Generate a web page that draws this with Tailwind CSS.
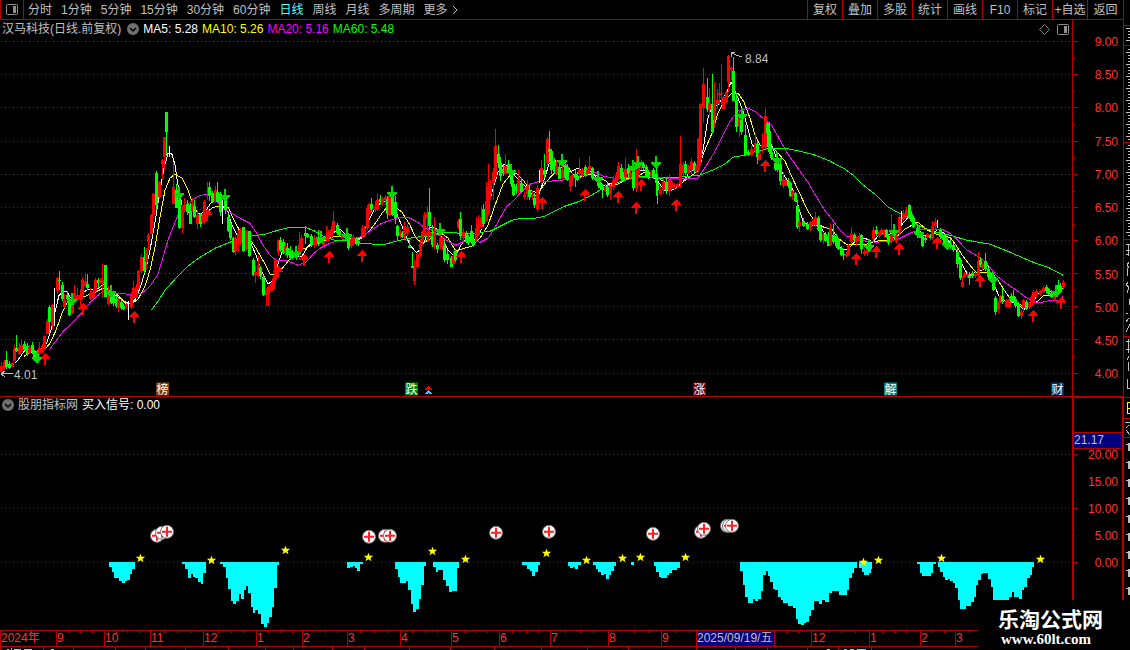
<!DOCTYPE html>
<html lang="zh-CN">
<head>
  <meta charset="UTF-8" />
  <meta name="viewport" content="width=device-width, initial-scale=1" />
  <title>汉马科技 日线</title>
  <script src="https://cdn.jsdelivr.net/npm/@tailwindcss/browser@4"></script>
</head>
<body class="relative flex h-screen min-h-[480px] overflow-hidden bg-black font-['Liberation_Sans','Noto_Sans_CJK_SC',sans-serif] text-[12px] leading-[14px] text-[#c0c0c0]">
  <div class="flex min-w-0 flex-1 flex-col">

    <header class="flex h-5 shrink-0 items-stretch justify-between border-b border-[#b40000] whitespace-nowrap">
      <nav class="flex items-center gap-[9px]">
        <button aria-label="侧栏" class="-mr-[5px] flex h-full w-6 items-center justify-center border-x border-[#b40000]">
          <svg class="h-[11px] w-3" viewBox="0 0 12 11"><rect x=".5" y=".5" width="11" height="10" rx="1" fill="none" stroke="#909090" /><rect x="7" y="2" width="3" height="7" fill="#909090" /></svg>
        </button>
        <button>分时</button>
        <button>1分钟</button>
        <button>5分钟</button>
        <button>15分钟</button>
        <button>30分钟</button>
        <button>60分钟</button>
        <button class="text-[#54fcfc]">日线</button>
        <button>周线</button>
        <button>月线</button>
        <button>多周期</button>
        <button class="flex items-center gap-1">更多
          <svg class="h-2 w-[6px]" viewBox="0 0 6 8"><path d="M1 0l4 4-4 4" fill="none" stroke="#c0c0c0" /></svg>
        </button>
      </nav>
      <div class="flex">
        <button class="w-[35px] border-l border-[#b40000]">复权</button>
        <button class="w-[35px] border-l border-[#b40000]">叠加</button>
        <button class="w-[35px] border-l border-[#b40000]">多股</button>
        <button class="w-[35px] border-l border-[#b40000]">统计</button>
        <button class="w-[35px] border-l border-[#b40000]">画线</button>
        <button class="w-[35px] border-l border-[#b40000]">F10</button>
        <button class="w-[35px] border-l border-[#b40000]">标记</button>
        <button class="w-[35px] border-l border-[#b40000]">+自选</button>
        <button class="w-[36px] border-l border-[#b40000]">返回</button>
      </div>
    </header>

    <!-- K线 -->
    <section class="flex min-h-0 grow-[377] basis-0 border-b border-[#b40000]">
      <div id="pricePlot" class="relative min-w-0 flex-1">
        <svg id="priceSvg" class="absolute inset-0 h-full w-full" viewBox="0 20 1072 376" preserveAspectRatio="none" shape-rendering="crispEdges"></svg>
        <div class="relative flex items-center justify-between pt-[2px] pr-[3px] pl-[2px] whitespace-nowrap">
          <div class="flex items-center gap-1">
            <h1 class="pr-[2px]">汉马科技(日线.前复权)</h1>
            <button aria-label="展开">
              <svg class="h-3 w-3" viewBox="0 0 12 12"><circle cx="6" cy="6" r="6" fill="#707070" /><path d="M3 5l3 3 3-3" fill="none" stroke="#000" stroke-width="1.5" /></svg>
            </button>
            <span class="text-white">MA5: 5.28</span>
            <span class="text-[#ffff00]">MA10: 5.26</span>
            <span class="text-[#ff00ff]">MA20: 5.16</span>
            <span class="text-[#00ff00]">MA60: 5.48</span>
          </div>
          <div class="flex items-center gap-[7px]">
            <svg class="h-[11px] w-[11px]" viewBox="0 0 11 11"><path d="M5.5 .5l5 5-5 5-5-5z" fill="none" stroke="#808080" /></svg>
            <svg class="h-[11px] w-3" viewBox="0 0 12 11"><rect x=".5" y=".5" width="11" height="10" rx="1" fill="none" stroke="#909090" /><rect x="7" y="2" width="3" height="7" fill="#909090" /></svg>
          </div>
        </div>
      </div>
      <div class="relative w-[51px] shrink-0 border-l border-[#b40000] pr-[5px]">
        <svg id="priceTicks" class="absolute inset-0 h-full w-[6px]" viewBox="1073 20 6 376" preserveAspectRatio="none" shape-rendering="crispEdges"></svg>
        <ul class="flex h-full flex-col justify-between pt-[15px] pb-[15px] text-right text-[#ff3232]">
          <li>9.00</li><li>8.50</li><li>8.00</li><li>7.50</li><li>7.00</li><li>6.50</li><li>6.00</li><li>5.50</li><li>5.00</li><li>4.50</li><li>4.00</li>
        </ul>
      </div>
    </section>

    <!-- 副图指标 -->
    <section class="flex min-h-0 grow-[233] basis-0">
      <div class="relative min-w-0 flex-1">
        <svg id="signalSvg" class="absolute inset-0 h-full w-full" viewBox="0 397 1072 233" preserveAspectRatio="none"></svg>
        <div class="relative flex items-center gap-1 pt-[1px] pl-[2px] whitespace-nowrap">
          <button aria-label="展开">
            <svg class="h-3 w-3" viewBox="0 0 12 12"><circle cx="6" cy="6" r="6" fill="#707070" /><path d="M3 5l3 3 3-3" fill="none" stroke="#000" stroke-width="1.5" /></svg>
          </button>
          <h2>股朋指标网</h2>
          <span class="text-white">买入信号: 0.00</span>
        </div>
      </div>
      <div class="relative w-[51px] shrink-0 border-x border-l-2 border-t border-[#b40000] pr-1">
        <svg id="signalTicks" class="absolute inset-0 h-full w-[5px]" viewBox="1074 398 5 232" preserveAspectRatio="none" shape-rendering="crispEdges"></svg>
        <span class="absolute inset-x-0 top-[34px] h-[17px] border-y border-[#b40000] bg-[#000080]">21.17</span>
        <ul class="relative flex h-full flex-col justify-between pt-[50px] pb-[60px] text-right text-[#ff3232]">
          <li>20.00</li><li>15.00</li><li>10.00</li><li>5.00</li><li>0.00</li>
        </ul>
      </div>
    </section>

    <!-- 时间轴 -->
    <footer class="relative shrink-0">
      <ol id="months" class="flex h-[17px] border-y border-[#b40000] text-[#ff3232]"></ol>
      <svg id="monthTicks" class="absolute inset-x-0 top-0 h-5 w-full" viewBox="0 630 1123 20" preserveAspectRatio="none" shape-rendering="crispEdges"></svg>
      <div class="h-[3px]"></div>
    </footer>
  </div>

  <aside class="w-[7px] shrink-0 border-l border-[#b40000]">
    <svg id="sideSvg" class="h-full w-full" viewBox="1124 0 6 650" preserveAspectRatio="none" shape-rendering="crispEdges"></svg>
  </aside>

  <a href="#" class="absolute right-0 bottom-0 flex h-[50px] w-[152px] flex-col items-start bg-black pt-[8px] pl-5 font-bold text-white">
    <span class="text-[21px] leading-[23px]">乐淘公式网</span>
    <span class="pl-[3px] font-['Liberation_Serif',serif] text-[15px] leading-[16px]">www.60lt.com</span>
  </a>

  <script>
    // x 最高 实体上 实体下 最低 颜色(r/g/w)
    const candles = `
1 362 366 372 374 r,4 360 362 368 370 r,6 351 360 367 369 g,9 361 364 368 369 g,12 362 363 367 367 r,14 345 349 361 362 r,16 335 348 351 352 g,19 343 347 354 355 r,21 339 345 351 352 r,24 341 344 350 351 g,27 343 346 354 356 g,29 345 347 353 354 r,32 342 345 352 354 g,34 350 352 358 359 g,37 350 353 358 361 g,39 342 348 354 355 r,42 344 346 352 353 r,44 335 336 350 350 r,47 319 321 334 334 r,49 305 307 322 333 g,52 304 305 326 329 r,54 288 288 289 326 w,57 277 278 291 294 r,59 271 280 281 290 g,62 282 285 299 301 g,64 294 300 307 308 r,67 291 295 299 303 g,69 298 300 315 316 g,72 300 304 313 314 r,74 285 293 302 303 r,77 288 295 300 301 r,80 289 295 300 305 r,82 277 280 295 299 r,85 273 281 286 287 r,87 274 284 288 290 g,90 288 293 299 300 r,93 289 291 298 299 r,95 278 280 291 292 r,98 278 280 283 288 g,100 278 280 283 284 r,102 264 280 283 298 r,105 265 265 297 297 g,108 286 296 304 305 r,111 285 296 303 304 g,113 292 295 303 306 g,116 296 299 306 308 g,118 298 301 307 312 r,121 300 302 308 310 g,123 304 306 309 310 g,126 303 304 306 309 r,128 301 305 306 320 w,131 292 295 307 309 r,133 281 288 298 300 r,136 284 287 297 298 r,138 270 271 288 289 r,141 254 257 271 273 r,144 247 257 271 273 g,146 248 251 262 270 r,148 233 235 242 250 r,151 214 215 234 234 r,153 193 194 215 215 r,156 171 173 205 210 g,159 181 182 197 199 r,162 159 160 164 180 r,164 137 137 157 170 r,166 112 112 132 156 g,169 146 153 154 157 w,173 162 187 204 204 r,176 184 190 208 208 g,179 190 200 228 229 g,182 205 212 228 233 r,184 198 205 211 212 r,187 200 204 212 215 g,190 203 205 224 224 g,192 198 203 211 212 r,194 200 206 217 218 g,197 210 215 224 229 r,200 213 214 224 227 g,202 214 216 222 223 r,204 200 202 222 223 r,207 182 191 192 200 r,209 182 187 195 201 g,212 191 193 202 203 g,215 186 190 202 203 r,217 182 192 202 203 g,220 192 194 212 216 g,222 200 200 201 224 w,225 195 200 210 214 g,228 213 217 231 232 g,230 222 224 238 240 g,233 237 238 252 253 g,235 236 238 251 255 r,238 230 233 244 251 r,240 228 230 243 245 r,243 227 227 251 252 g,246 230 231 249 251 r,249 231 231 256 257 g,253 258 260 275 276 g,255 266 272 275 283 r,258 255 265 274 277 r,260 266 268 276 279 g,263 275 277 295 296 g,266 288 290 295 306 r,268 285 287 294 306 r,271 282 284 291 292 r,273 276 278 289 290 r,275 259 260 280 283 r,278 239 241 252 255 r,280 237 240 250 252 g,283 239 242 253 254 g,285 243 246 252 256 r,287 243 248 255 258 g,290 246 251 258 260 g,292 250 254 258 259 g,296 246 251 257 260 g,299 232 245 255 260 r,301 235 238 250 252 r,305 226 233 236 244 g,307 233 234 237 238 g,311 234 236 245 247 g,314 235 238 245 248 r,316 237 240 243 246 r,318 230 240 244 246 g,323 240 241 245 246 r,326 226 236 240 242 r,328 230 232 238 241 r,331 226 229 237 239 r,333 211 221 231 233 r,337 223 225 233 235 g,339 230 231 235 237 g,342 233 236 238 240 r,348 233 238 248 250 g,351 236 239 246 248 r,353 235 237 243 245 r,356 237 238 244 245 g,358 239 241 244 246 g,362 225 228 236 238 r,364 226 228 236 237 r,367 205 208 228 230 r,369 203 204 213 215 r,371 198 204 209 212 g,375 201 206 210 212 r,377 194 200 209 211 r,380 195 199 202 205 g,382 197 199 203 206 r,385 195 197 200 205 r,387 196 199 214 219 g,389 193 196 215 216 r,392 190 194 215 216 g,395 196 202 218 224 g,397 225 226 236 240 g,400 230 232 236 238 r,402 231 233 237 238 g,404 222 226 238 239 r,407 224 227 233 236 r,409 240 246 248 248 g,412 252 266 268 268 g,414 260 268 281 285 r,417 252 254 267 268 r,420 239 244 256 257 r,422 230 232 240 245 r,424 212 215 232 236 r,427 206 213 217 236 r,429 188 212 226 228 g,432 225 232 245 247 g,434 217 233 247 249 r,437 243 245 249 253 g,440 233 238 246 249 r,442 236 240 247 250 r,444 240 246 260 262 g,447 250 254 260 264 g,451 256 258 267 267 g,453 250 256 264 265 r,455 249 251 260 262 g,458 219 221 228 229 r,460 212 219 236 240 g,463 228 232 238 243 r,466 231 233 242 243 g,468 235 237 243 245 g,471 225 231 242 244 g,473 235 240 245 247 g,476 217 228 240 242 r,478 215 224 235 236 r,481 206 217 227 229 r,483 204 209 224 227 g,486 182 201 221 222 r,488 164 187 213 215 r,490 180 184 194 200 r,493 168 172 183 200 r,495 129 146 177 179 r,498 145 154 163 168 g,500 157 163 176 181 g,503 165 169 173 176 g,505 154 166 174 175 r,508 160 164 172 173 g,511 165 174 184 187 g,513 180 184 195 196 g,516 184 186 191 194 g,518 170 180 192 193 r,521 178 183 192 193 g,524 192 195 197 199 r,527 180 186 194 200 r,529 185 190 197 200 g,532 191 194 197 200 r,534 193 198 205 208 g,537 185 188 209 212 r,539 170 171 172 183 w,541 160 168 182 185 r,544 154 170 175 178 g,547 137 139 163 166 r,549 131 149 152 162 g,551 149 151 170 174 g,554 158 161 172 174 g,556 160 166 174 175 r,559 163 167 179 179 g,562 165 170 178 180 r,565 163 165 178 179 g,567 164 167 180 181 g,570 176 178 187 191 r,572 173 175 178 185 r,575 170 174 178 187 g,577 172 176 180 181 g,579 158 170 174 178 r,582 168 170 175 177 r,585 165 167 176 177 g,587 168 170 174 176 r,589 156 166 169 173 r,592 167 168 178 180 g,598 174 178 186 188 g,600 182 184 188 190 g,602 184 187 190 198 g,605 184 187 191 192 r,607 183 187 195 197 g,610 184 186 194 200 r,613 176 180 187 190 r,616 172 175 182 184 r,618 162 166 179 180 r,621 164 168 179 181 g,623 172 175 180 182 g,625 158 169 177 180 r,628 164 168 174 178 g,630 170 173 177 180 r,633 166 172 188 191 g,636 149 171 189 192 r,638 157 165 173 178 r,641 160 162 168 170 r,643 162 164 168 170 g,646 165 167 176 178 g,648 170 173 178 179 g,651 170 172 176 178 r,653 168 170 177 179 g,656 165 174 183 196 g,657 180 183 190 204 g,660 187 190 194 195 r,663 178 182 190 194 r,666 178 182 190 194 g,669 174 180 191 196 r,671 180 182 188 190 r,674 183 185 187 189 r,677 183 184 187 188 r,680 136 164 184 188 r,683 162 165 173 176 r,685 161 164 173 175 g,688 165 167 173 174 r,691 158 162 170 174 r,694 161 163 171 173 g,696 165 166 171 173 r,698 138 139 170 172 r,700 103 104 160 165 r,703 68 84 108 123 r,707 78 97 109 112 g,709 88 103 110 116 r,712 74 104 132 134 g,714 82 104 120 128 r,717 89 100 104 109 r,719 83 93 95 105 r,721 64 93 94 105 r,723 96 97 109 109 r,726 90 92 102 103 r,728 55 56 82 92 r,731 67 68 69 80 r,733 57 71 101 101 g,736 93 100 127 132 g,739 110 118 126 137 r,741 110 120 132 135 g,745 125 135 155 156 g,748 150 152 155 156 g,751 146 149 155 156 r,755 134 143 151 153 r,757 141 144 157 164 g,759 150 153 160 161 r,762 133 145 148 153 r,765 109 116 147 149 r,767 122 124 133 147 g,769 122 131 152 154 g,771 147 152 158 160 g,775 160 163 169 171 g,777 158 160 170 172 g,780 160 164 181 185 g,783 172 179 186 188 r,785 178 180 185 186 r,788 178 181 186 188 g,790 182 183 196 197 g,792 190 191 195 200 r,795 192 193 201 202 g,797 200 206 227 229 g,799 218 222 226 232 r,803 218 221 226 227 g,807 222 224 229 230 g,810 221 222 227 231 r,813 219 220 225 226 r,815 212 217 225 227 r,818 216 218 230 231 g,820 225 227 240 242 g,823 232 234 240 244 r,825 232 234 241 242 g,828 232 236 246 246 g,830 223 228 245 246 r,833 224 235 242 244 g,836 234 236 246 248 g,838 238 240 249 250 g,841 246 248 255 256 g,843 250 254 255 260 g,846 252 254 256 257 r,848 244 245 255 256 r,851 227 234 242 244 r,854 233 235 240 242 g,856 236 238 242 246 r,859 233 236 241 243 r,861 234 235 249 254 g,864 249 251 254 256 r,867 247 250 253 256 r,869 239 242 248 252 g,873 227 230 239 241 r,876 226 230 234 236 g,879 231 232 236 238 r,881 228 230 233 235 r,884 229 230 235 237 r,886 229 230 237 238 g,888 234 236 243 245 g,891 214 235 241 244 r,894 224 231 236 240 g,896 232 236 242 244 r,899 215 217 233 236 r,901 211 214 215 224 w,903 210 213 219 221 r,906 207 210 216 217 r,909 204 205 217 219 g,911 211 214 221 222 g,913 216 218 227 228 g,917 224 228 236 238 g,922 233 236 246 247 g,925 236 238 240 243 g,927 233 234 237 238 r,930 234 235 238 239 g,932 221 226 238 240 r,935 218 222 226 229 r,937 220 222 223 228 w,940 228 230 237 239 g,942 233 235 238 240 g,944 235 237 244 246 g,947 239 242 248 250 g,950 239 243 247 249 g,953 243 245 250 252 g,957 248 252 264 268 g,960 258 260 278 280 g,962 276 282 287 287 r,964 272 274 277 278 r,967 272 274 276 278 r,969 272 275 278 285 g,972 271 273 276 278 g,975 272 274 276 278 r,978 252 261 275 277 r,980 257 260 265 267 g,982 262 264 268 270 r,985 253 261 269 271 g,988 267 269 277 279 g,990 272 274 280 282 g,993 273 276 290 291 g,995 296 298 312 315 g,998 301 303 309 313 r,1000 295 296 302 303 r,1002 288 296 302 304 g,1006 299 300 307 308 r,1009 298 299 307 308 r,1011 293 296 302 303 g,1013 290 296 301 302 g,1015 297 299 306 308 g,1018 302 304 316 317 g,1021 310 312 316 319 r,1023 299 300 308 312 r,1026 300 302 309 310 g,1029 302 303 307 309 r,1031 295 297 306 307 r,1033 290 292 302 303 r,1036 289 291 296 298 r,1040 290 291 295 296 r,1043 286 288 292 293 r,1046 285 287 291 293 g,1048 288 289 294 295 g,1051 290 293 297 298 g,1054 291 293 299 301 r,1058 280 285 290 292 g,1060 283 286 292 293 g,1063 280 282 287 290 r`;

    const averages = [
      ["#ffffff", "15,363 20,357 24,351 30,348 36,353 42,351 47,342 51,330 55,312 59,295 63,292 67,291 70,297 76,300 82,293 88,289 97,289 103,284 110,291 117,296 124,301 131,304 136,298 141,285 146,268 150,250 155,222 160,190 164,168 168,153 172,154 175,165 178,185 182,205 188,213 194,210 200,214 206,210 212,201 217,197 222,205 228,212 232,225 238,237 244,234 250,241 256,255 262,272 268,284 273,280 278,264 284,246 290,250 296,257 302,256 308,246 316,240 324,240 332,233 340,229 348,237 356,240 362,236 368,222 374,210 382,201 390,203 397,214 404,231 410,245 417,253 424,242 430,227 436,228 442,238 448,250 455,257 461,245 467,237 474,240 480,233 486,215 492,192 498,172 504,164 510,168 516,177 524,185 532,194 538,196 544,180 549,164 556,160 564,165 570,172 578,168 585,173 592,171 598,180 604,186 612,183 620,174 628,173 634,181 640,170 646,170 652,177 658,181 664,190 670,191 678,187 683,182 690,171 698,170 703,150 708,118 712,105 717,106 722,99 727,92 731,82 736,93 742,108 747,125 752,144 757,150 762,150 768,139 773,148 779,166 785,177 791,185 796,198 800,212 804,223 812,225 820,226 826,236 835,239 842,250 848,249 856,240 865,238 873,242 880,233 888,234 896,233 903,223 910,215 916,223 922,235 930,236 938,229 944,233 950,243 956,250 962,264 968,275 976,272 984,269 988,265 993,282 1000,298 1008,302 1016,303 1024,309 1032,303 1040,291 1048,290 1056,294 1063,285"],
      ["#ffff00", "24,356 30,352 38,351 44,350 50,343 56,330 62,313 68,301 76,296 85,296 95,292 103,288 110,290 118,295 126,303 132,303 138,299 145,286 150,270 155,247 160,217 165,190 170,178 175,174 182,178 188,190 194,208 200,215 207,212 213,207 222,206 228,207 234,220 240,231 248,236 256,248 264,262 270,274 276,275 284,266 292,256 300,250 308,247 316,241 325,240 335,236 345,236 355,241 363,237 370,230 376,222 382,213 388,206 394,206 402,212 410,225 416,238 422,243 430,239 440,232 448,238 456,251 464,248 472,246 480,238 488,225 495,205 503,184 510,175 516,173 524,181 530,190 538,193 546,182 555,172 563,166 568,167 573,174 580,177 590,174 598,176 606,181 612,186 620,183 628,178 636,178 644,172 652,173 660,179 668,184 676,186 684,181 692,175 698,171 704,152 712,133 718,113 724,101 732,93 738,93 744,102 750,118 755,135 760,145 766,145 772,147 778,153 785,161 792,177 800,194 808,211 816,223 824,227 832,229 838,238 846,244 856,244 866,244 876,241 886,240 896,237 905,229 912,225 918,222 926,229 934,233 942,236 950,237 956,245 963,256 970,265 976,272 984,272 992,273 998,280 1005,291 1013,302 1022,305 1030,304 1038,301 1044,295 1052,296 1063,288"],
      ["#ff00ff", "49,350 55,342 63,331 72,323 82,312 92,300 103,291 115,293 130,294 142,293 150,286 158,274 163,257 168,240 173,227 178,215 184,208 190,202 198,196 206,194 214,197 222,207 230,212 240,218 250,223 256,232 263,245 270,255 276,260 286,260 298,265 306,262 313,254 320,248 330,243 340,240 350,239 360,237 370,231 380,224 390,220 400,217 408,217 416,221 424,227 432,230 440,236 448,241 456,245 464,241 472,239 480,242 488,238 494,229 500,218 507,206 514,200 522,191 530,184 540,181 550,181 562,180 575,177 585,174 595,172 603,176 615,178 640,177 670,178 698,178 706,166 714,153 722,137 730,121 738,111 748,108 756,112 764,119 772,126 780,140 788,154 800,171 808,182 816,196 824,209 832,219 840,230 846,236 856,238 866,241 876,242 890,241 900,238 910,233 918,230 930,229 942,229 950,233 958,240 966,249 976,255 986,262 996,275 1006,283 1018,291 1026,297 1034,302 1042,302 1052,300 1060,300 1063,296"],
      ["#00ff00", "151,310 158,301 165,290 175,279 188,266 200,257 215,248 230,242 240,238 250,236 265,234 278,230 290,227 305,227 315,231 325,237 335,240 350,240 360,243 375,244 385,244 400,240 415,237 430,236 445,232 460,233 475,233 490,231 500,226 512,220 522,218 535,218 545,216 555,211 565,206 580,201 590,196 600,190 612,184 625,180 640,176 660,178 680,177 700,175 715,169 725,164 733,157 745,155 757,151 770,148 785,148 800,151 815,155 830,161 845,169 853,175 862,184 875,194 887,206 897,212 908,217 918,225 935,232 950,235 967,240 990,244 1010,252 1033,262 1048,267 1063,275"]
    ];

    const buys = [[45,353],[83,303],[134,311],[207,209],[278,266],[304,254],[329,251],[362,250],[428,230],[461,251],[542,197],[585,189],[618,191],[636,202],[641,179],[676,199],[765,160],[856,253],[876,246],[899,243],[937,237],[980,275],[1033,310],[1061,297]];
    const sells = [[37,363],[72,305],[111,297],[179,199],[225,201],[296,258],[321,243],[347,240],[392,198],[440,235],[511,176],[562,166],[598,183],[633,172],[638,168],[656,168],[742,120],[777,164],[869,251],[894,236],[919,238],[947,249],[993,284],[1056,297]];

    const red = "#b40000";
    const hline = (y, w) => `<path d="M1 ${y + 0.5}H${w}" stroke="#c80000" stroke-dasharray="1 3" />`;

    let price = [41, 74, 107, 141, 174, 207, 240, 273, 306, 339, 373].map(y => hline(y, 1072)).join("");
    // 均线在K线下面
    averages.forEach(([color, pts]) => {
      price += `<polyline points="${pts}" fill="none" stroke="${color}" />`;
    });
    const colors = { r: "#ff0000", g: "#00ff00", w: "#ffffff" };
    candles.trim().split(",").forEach(row => {
      const [x, hi, top, bot, lo, c] = row.split(" ");
      price += `<rect x="${x}" y="${hi}" width="1" height="${lo - hi}" fill="${colors[c]}" />`;
      if (c !== "w") price += `<rect x="${x - 1}" y="${top}" width="3" height="${Math.max(1, bot - top)}" fill="${colors[c]}" />`;
    });
    buys.forEach(([x, y]) => {
      price += `<path d="M${x} ${y}h1l4 5v1h-4v6h-2v-6h-4v-1z" fill="#ff0000" />`;
    });
    sells.forEach(([x, y]) => {
      price += `<path d="M${x} ${y}h1l4 -5v-1h-4v-6h-2v6h-4v1z" fill="#00d800" />`;
    });
    price += `<path d="M1 373.5H13M1 373.5l4 -3M1 373.5l4 3M731.5 57V52.5H735M731 53l11 4" fill="none" stroke="#c0c0c0" />`;
    price += `<path d="M425 390v-1l3 -3h1l3 3v1h-2l-1 -1h-1l-1 1z" fill="#ff0000" /><path d="M425 394v-1l3 -3h1l3 3v1h-2l-1 -1h-1l-1 1z" fill="#40c0ff" />`;
    document.getElementById("priceSvg").innerHTML = price;

    let ticks = "";
    [41, 74, 107, 141, 174, 207, 240, 273, 306, 339, 373].forEach(y => {
      ticks += `<rect x="1073" y="${y}" width="5" height="1" fill="${red}" />`;
      if (y < 373) ticks += `<rect x="1073" y="${y + 17}" width="2" height="1" fill="${red}" />`;
    });
    document.getElementById("priceTicks").innerHTML = ticks;

    // 图上文字: x, y(中心), 文字, 样式
    const labels = [
      [14, 374, "4.01", ""],
      [745, 58, "8.84", ""],
      [156, 389, "榜", "bg-[#804000] text-white"],
      [405, 389, "跌", "bg-[#008000] text-white"],
      [693, 389, "涨", "bg-[#700000] text-white"],
      [884, 389, "解", "bg-[#008080] text-white"],
      [1051, 389, "财", "bg-[#003468] text-white"]
    ];
    const plot = document.getElementById("pricePlot");
    labels.forEach(([x, y, text, cls]) => {
      const el = document.createElement("span");
      el.className = "absolute flex h-[13px] min-w-[13px] -translate-y-1/2 items-center justify-center overflow-hidden " + cls;
      el.style.left = (x / 1072 * 100) + "%";
      el.style.top = ((y - 20) / 376 * 100) + "%";
      el.textContent = text;
      plot.appendChild(el);
    });

    // 副图
    const bars = "M109 562V567H112V572H114V578H119V581H122V583H125V581H127V580H130V574H132V569H135V562Z M182 562V564H185V569H188V578H191V574H193V577H195V578H198V582H201V584H203V573H206V562Z M220 562V564H223V567H226V578H228V589H231V601H233V604H236V601H239V594H241V599H244V590H246V586H248V593H251V607H253V613H255V610H258V614H261V624H264V627H267V623H269V617H272V607H274V588H277V565H279V562Z M347 562V568H350V567H353V566H355V568H357V571H360V564H363V562Z M395 562V569H398V577H400V583H406V581H408V590H411V604H413V612H416V609H419V599H421V585H424V566H426V562Z M433 562V567H436V572H438V570H443V580H446V586H449V592H452V591H457V568H459V562Z M522 562V565H527V569H530V571H532V576H535V572H538V565H540V562Z M568 562V566H570V568H573V567H575V569H578V565H581V562Z M593 562V565H596V569H598V572H601V575H604V574H606V579H609V575H611V571H614V566H616V562Z M631 562V565H634V562Z M654 562V566H656V572H659V577H661V578H667V575H669V573H672V570H677V568H680V562Z M740 562V571H743V585H745V597H748V603H753V599H755V601H758V599H761V591H763V575H766V571H768V576H770V582H773V589H775V590H778V597H781V600H783V603H788V606H793V608H796V619H798V624H801V625H804V623H806V622H809V616H811V610H814V601H819V604H822V600H825V602H829V593H832V591H839V595H847V590H849V578H852V573H854V568H857V562Z M859 562V568H862V572H864V575H869V573H871V569H872V562Z M917 562V564H920V573H922V576H931V573H933V564H936V562Z M938 562V567H940V572H943V577H945V580H948V579H950V581H953V583H955V588H958V600H960V609H966V606H971V602H974V597H976V585H978V580H981V574H983V573H988V579H991V587H993V600H1009V597H1012V592H1014V597H1019V599H1022V590H1024V587H1027V578H1030V575H1032V567H1034V562Z";
    const stars = [[140,558],[211,560],[285,550],[368,557],[432,551],[465,559],[546,553],[586,560],[622,558],[640,557],[685,557],[863,562],[878,560],[941,558],[1040,559]];
    const crosses = [[157,536],[162,533],[167,532],[369,537],[385,536],[390,536],[496,533],[549,532],[653,534],[701,532],[704,529],[727,526],[729,526],[732,526]];
    let signal = `<g shape-rendering="crispEdges">${hline(454, 1072)}${hline(508, 1072)}${hline(562, 1072)}<path d="${bars}" fill="#00ffff" /></g>`;
    crosses.forEach(([x, y]) => {
      signal += `<circle cx="${x}" cy="${y}" r="6.5" fill="#fff" stroke="#707070" /><path d="M${x - 5} ${y}h10M${x} ${y - 5}v10" stroke="#ff2020" stroke-width="2" />`;
    });
    stars.forEach(([x, y]) => {
      signal += `<path d="M${x + 0.5} ${y - 4}l1.2 3h3.5l-2.7 2.2 1 3.3-3-2-3 2 1-3.3-2.7-2.2h3.5z" fill="#ffff00" />`;
    });
    document.getElementById("signalSvg").innerHTML = signal;
    document.getElementById("signalTicks").innerHTML = [454, 481, 508, 535, 562].map((y, i) =>
      `<rect x="1074" y="${y}" width="${i % 2 ? 1 : 4}" height="1" fill="${red}" />`).join("");

    // 月份, 起点
    const months = [["2024年",0],["9",56],["10",104],["11",150],["12",203],["1",256],["2",302],["3",347],["4",400],["5",451],["6",499],["7",550],["8",608],["9",661],["2025/09/19/五",696],["",774],["12",811],["1",869],["2",920],["3",955]];
    document.getElementById("months").innerHTML = months.map(([name, start], i) => {
      const end = i < months.length - 1 ? months[i + 1][1] : 1123;
      const cls = name.length > 8 ? "bg-[#000080] text-[#c0c0c0]" : "";
      return `<li class="shrink-0 border-l border-[#b40000] whitespace-nowrap ${cls}" style="width:${(end - start) / 1123 * 100}%">${name}</li>`;
    }).join("");

    let mt = [68,80,92,116,127,139,164,177,191,218,231,243,268,280,292,313,325,337,360,374,387,412,425,437,464,475,487,512,526,538,565,580,593,621,634,648,675,689,786,798,829,841,855,882,894,906,931,944,969]
      .map(x => `<rect x="${x}" y="630" width="1" height="3" fill="${red}" />`).join("");
    mt += [0,43,73,115,145,185,228,265,293,332,364,409,450,494,541,587,628,696,735,767,807,838,871]
      .map(x => `<rect x="${x}" y="647" width="1" height="3" fill="${red}" />`).join("");
    mt += `<path d="M7 649.5h2M11 648v2M14 649.5h7M24 649.5h8M51 649.5h3M827 649.5h3" stroke="#c0c0c0" /><path d="M844 649.5h3M850 649.5h4M857 649.5h9" stroke="#00ffff" />`;
    document.getElementById("monthTicks").innerHTML = mt;

    // 右侧栏露出的一角
    let side = [25, 45, 142, 239, 336, 397, 418, 437].map(y => `<rect x="1124" y="${y}" width="6" height="1" fill="${red}" />`).join("");
    let marks = "";
    for (let y = 28; y < 237; y += 3) {
      if (Math.abs(y - 45) < 3 || Math.abs(y - 142) < 3) continue;
      const long = y % 4 === 0;
      marks += `M${long ? 1126 : 1128} ${y + 0.5}H1130`;
    }
    marks += "M1126 244.5h4M1128.5 244v12M1126 250.5h4M1126 254.5h2M1129 262l-2 3 2 3M1127.5 268v8M1128 282l-2 3 3 2-2 6M1129.5 299v6M1126 313h2M1129 318l-3 4M1130 324l-4 8M1126 341.5h4M1128.5 339v14M1126 349.5h4M1129 356l-2 4M1128.5 362v9M1127.5 379v9h2M1125 422.5h5M1129 425l-3 3M1126 430l4 5";
    side += `<path d="${marks}" fill="none" stroke="#c0c0c0" />`;
    side += `<path d="M1130 402.5h-2.5v11h2.5M1127 408.5h3" fill="none" stroke="#ffff00" />`;
    for (let y = 443; y < 600; y += 18) {
      side += `<path d="M1126 ${y + 1}h2v-1h2v8h-2v-6h-2z" fill="#c0c0c0" />`;
    }
    document.getElementById("sideSvg").innerHTML = side;
  </script>
</body>
</html>
